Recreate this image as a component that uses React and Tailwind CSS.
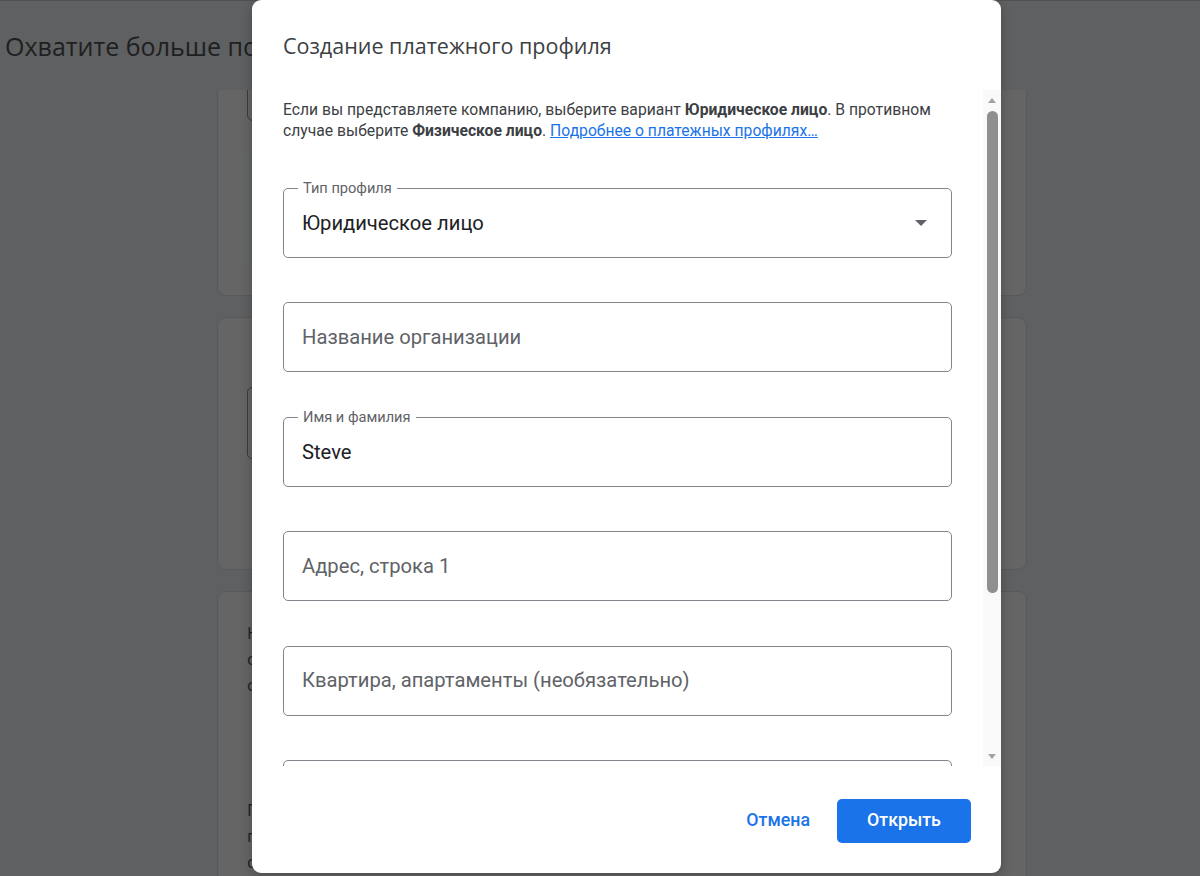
const fields = [
  { label: "Тип профиля", value: "Юридическое лицо", select: true },
  { placeholder: "Название организации" },
  { label: "Имя и фамилия", value: "Steve" },
  { placeholder: "Адрес, строка 1" },
  { placeholder: "Квартира, апартаменты (необязательно)" },
  { placeholder: "Город" },
];

function Field({ label, value, placeholder, select }) {
  return (
    <div className="relative h-[70px] shrink-0 rounded-[5px] border border-[#80868b] flex items-center pl-[18px] pr-[22px]">
      {label && (
        <span className="absolute left-[14px] -top-[11px] bg-white px-[5px] text-[14.6px] leading-[20px] text-[#5f6368]">
          {label}
        </span>
      )}
      {value ? (
        <span className="flex-1 text-[20.2px] text-[#202124]">{value}</span>
      ) : (
        <span className="flex-1 text-[20.2px] text-[#5f6368]">{placeholder}</span>
      )}
      {select && (
        <svg width="12" height="6" viewBox="0 0 12 6" className="mr-[2px]">
          <path d="M0 0h12L6 6z" fill="#5f6368" />
        </svg>
      )}
    </div>
  );
}

function BackgroundPage() {
  return (
    <div className="h-full flex flex-col font-['Open_Sans',sans-serif]">
      <div className="h-[89px] shrink-0 pl-[5px] pt-[27px]">
        <h1 className="text-[25px] leading-[36px] text-[#1e1f20] whitespace-nowrap">
          Охватите больше покупателей
        </h1>
      </div>
      <div className="flex-1 overflow-hidden pl-[217px] pr-[173px]">
        <div className="-mt-[30px] flex flex-col gap-[21px]">
          <div className="h-[236px] rounded-[9px] border border-[#58595b] bg-[#656565] pl-[29px] pt-[20px]">
            <div className="h-[40px] w-[300px] rounded-[6px] border border-[#3a3b3c]" />
            <div className="mt-[20px] h-[133px] w-[500px] rounded-[8px] bg-[#636864]" />
          </div>
          <div className="h-[253px] rounded-[9px] border border-[#58595b] bg-[#656565] pl-[29px] pt-[69px]">
            <div className="h-[72px] w-[400px] rounded-[5px] border border-[#3a3b3c]" />
          </div>
          <div className="h-[300px] rounded-[9px] border border-[#58595b] bg-[#656565] pl-[29px] pt-[28px] text-[17px] leading-[26px] text-[#1e1f20]">
            <p>Найдите новых клиентов</p>
            <p>среди тех, кто ищет</p>
            <p>сходные товары</p>
            <p className="mt-[99px]">Привлекайте больше</p>
            <p>пользователей на</p>
            <p>свой сайт</p>
          </div>
        </div>
      </div>
    </div>
  );
}

export default function App() {
  return (
    <div className="w-[1200px] h-[876px] flex flex-col overflow-hidden bg-[#5f6062] font-['Roboto',sans-serif]">
      <div className="relative flex-1 border-t border-[#4f5051]">
        <BackgroundPage />

        <div className="absolute left-[252px] -top-[1px] w-[749px] h-[873px] rounded-[9px] bg-white shadow-[0_4px_12px_rgba(0,0,0,0.25)] flex flex-col">
          <div className="h-[90px] shrink-0 pl-[31px] pt-[30px]">
            <h2 className="font-['Open_Sans',sans-serif] text-[21.5px] leading-[32px] text-[#3c4043]">
              Создание платежного профиля
            </h2>
          </div>

          <div className="relative flex-1 overflow-hidden">
            <div className="pl-[31px] pr-[49px] pt-[9px]">
              <p className="text-[15.7px] leading-[21px] text-[#3c4043]">
                Если вы представляете компанию, выберите вариант <b>Юридическое лицо</b>. В противном
                случае выберите <b>Физическое лицо</b>.{" "}
                <a className="text-[#1a73e8] underline">Подробнее о платежных профилях…</a>
              </p>

              <div className="mt-[47px] flex flex-col gap-[44.4px]">
                {fields.map((f, i) => (
                  <Field key={i} {...f} />
                ))}
              </div>
            </div>

            <div className="absolute right-0 top-0 bottom-0 w-[18px] bg-[#f9f9f9] flex flex-col items-center">
              <svg width="8" height="5" viewBox="0 0 8 5" className="mt-[8px]">
                <path d="M0 5h8L4 0z" fill="#a3a3a3" />
              </svg>
              <div className="mt-[8px] h-[482px] w-[11px] rounded-full bg-[#8f8f8f]" />
              <div className="flex-1" />
              <svg width="8" height="5" viewBox="0 0 8 5" className="mb-[7px]">
                <path d="M0 0h8L4 5z" fill="#a3a3a3" />
              </svg>
            </div>
          </div>

          <div className="h-[107px] shrink-0 flex items-center justify-end gap-[3px] pr-[30px] pt-[2px]">
            <button className="h-[44px] px-[24px] text-[17.8px] font-medium text-[#1a73e8]">
              Отмена
            </button>
            <button className="h-[44px] w-[134px] rounded-[5px] bg-[#1a73e8] text-[17.8px] font-medium text-white">
              Открыть
            </button>
          </div>
        </div>
      </div>
      <div className="h-[3px] shrink-0 bg-[#e8e8e8]" />
    </div>
  );
}
